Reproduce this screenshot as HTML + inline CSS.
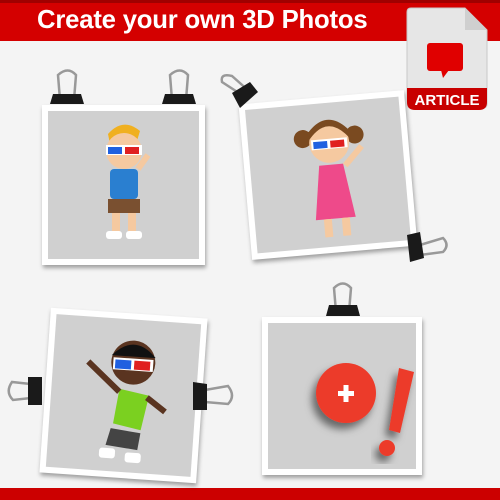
<!DOCTYPE html>
<html><head><style>
body{margin:0;width:500px;height:500px;overflow:hidden;background:#f4f4f4;position:relative;font-family:"Liberation Sans",sans-serif}
.top{position:absolute;left:0;top:0;width:500px;height:41px;background:#d40000;border-top:3px solid #a00000;box-sizing:border-box}
.top h1{margin:0;position:absolute;left:37px;top:3px;color:#fff;font-size:25.7px;font-weight:bold;letter-spacing:-0.2px}
.bot{position:absolute;left:0;top:488px;width:500px;height:12px;background:#cc0000}
.fr{position:absolute;background:#fff;box-shadow:1px 3px 4px rgba(0,0,0,.35);box-sizing:border-box;padding:6px}
.fr .in{width:100%;height:100%;background:#d0d0d0;position:relative;overflow:hidden}
.clip{position:absolute}
.art{position:absolute;left:405px;top:6px;width:84px;height:104px}
</style></head><body>
<div class="top"><h1>Create your own 3D Photos</h1></div>
<div class="bot"></div>

<!-- frame 1 -->
<div class="fr" style="left:42px;top:105px;width:163px;height:160px"><div class="in">
<svg width="151" height="148"><g transform="translate(40,8)">
<path d="M20 15 Q35 -2 52 12 L48 25 L22 25Z" fill="#f0b020"/>
<circle cx="36" cy="32" r="18" fill="#f5c9a0"/>
<rect x="18" y="26" width="36" height="10" fill="#fff"/><rect x="20" y="28" width="14" height="7" fill="#2060e0"/><rect x="37" y="28" width="14" height="7" fill="#e02020"/>
<rect x="22" y="50" width="28" height="30" rx="4" fill="#2a7fd0"/>
<rect x="20" y="80" width="32" height="14" fill="#7a5030"/>
<rect x="24" y="94" width="8" height="20" fill="#f5c9a0"/><rect x="40" y="94" width="8" height="20" fill="#f5c9a0"/>
<rect x="18" y="112" width="16" height="8" rx="3" fill="#fff"/><rect x="38" y="112" width="16" height="8" rx="3" fill="#fff"/>
<path d="M50 50 L60 36" stroke="#f5c9a0" stroke-width="6"/></g></svg>
</div></div>
<!-- frame 2 -->
<div class="fr" style="left:245px;top:97px;width:166px;height:156px;transform:rotate(-5deg)"><div class="in">
<svg width="154" height="144"><g transform="translate(45,6)">
<circle cx="10" cy="28" r="9" fill="#7a4a20"/><circle cx="62" cy="28" r="9" fill="#7a4a20"/>
<circle cx="36" cy="34" r="20" fill="#f5c9a0"/><path d="M16 30 Q36 5 56 30 L56 22 Q36 0 16 22Z" fill="#7a4a20"/>
<rect x="18" y="30" width="36" height="10" fill="#fff"/><rect x="20" y="32" width="14" height="7" fill="#2060e0"/><rect x="37" y="32" width="14" height="7" fill="#e02020"/>
<path d="M24 56 L48 56 L56 110 L16 110Z" fill="#ee4a8a"/>
<rect x="24" y="110" width="8" height="18" fill="#f5c9a0"/><rect x="42" y="110" width="8" height="18" fill="#f5c9a0"/>
<path d="M50 58 L68 40" stroke="#f5c9a0" stroke-width="6"/></g></svg>
</div></div>
<!-- frame 3 -->
<div class="fr" style="left:45px;top:313px;width:157px;height:165px;transform:rotate(4deg)"><div class="in">
<svg width="145" height="153"><g transform="translate(30,15)">
<circle cx="50" cy="28" r="22" fill="#5a3420"/><path d="M28 22 Q50 -2 72 22Z" fill="#111"/>
<rect x="30" y="24" width="40" height="12" fill="#fff"/><rect x="32" y="26" width="16" height="9" fill="#2060e0"/><rect x="51" y="26" width="16" height="9" fill="#e02020"/>
<path d="M38 55 L68 60 L62 95 L34 90Z" fill="#7bd020"/>
<path d="M32 95 L62 98 L60 115 L28 112Z" fill="#444"/>
<path d="M38 58 L5 30 M66 62 L85 75" stroke="#5a3420" stroke-width="6"/>
<rect x="22" y="115" width="16" height="10" rx="3" fill="#fff"/><rect x="48" y="118" width="16" height="10" rx="3" fill="#fff"/></g></svg>
</div></div>
<!-- frame 4 -->
<div class="fr" style="left:262px;top:317px;width:160px;height:158px"><div class="in">
<svg width="148" height="146">
<defs><filter id="s" x="-50%" y="-50%" width="200%" height="200%"><feDropShadow dx="-4" dy="6" stdDeviation="4" flood-opacity=".5"/></filter></defs>
<circle cx="78" cy="70" r="30" fill="#ec3b2c" filter="url(#s)"/>
<rect x="70" y="68" width="16" height="5" fill="#fff"/><rect x="75.5" y="62" width="5" height="17" fill="#fff"/>
<path d="M131 45 L146 49 L132 110 L121 107Z" fill="#ec3b2c" filter="url(#s)"/>
<circle cx="119" cy="125" r="8" fill="#ec3b2c" filter="url(#s)"/>
</svg>
</div></div>

<!-- clips -->
<svg class="clip" style="left:0;top:0" width="500" height="500">
<g fill="none" stroke="#999" stroke-width="2.5">
<path d="M60 100 L58 75 Q68 66 76 75 L74 100"/><path d="M172 100 L170 75 Q180 66 188 75 L186 100"/>
<path d="M336 312 L334 288 Q343 279 351 288 L349 312"/>
<path d="M242 95 L222 82 Q220 73 232 76 L250 92"/>
<path d="M420 245 L443 238 Q450 245 443 252 L420 255"/>
<path d="M40 385 L12 382 Q5 392 13 400 L40 397"/>
<path d="M205 390 L228 386 Q236 396 228 404 L205 402"/>
</g>
<g fill="#1a1a1a">
<path d="M53 94 L81 94 L84 104 L50 104Z"/><path d="M165 94 L193 94 L196 104 L162 104Z"/>
<path d="M329 305 L357 305 L360 316 L326 316Z"/>
<path d="M232 93 L250 82 L258 92 L240 108Z"/>
<path d="M407 235 L420 232 L424 258 L410 262Z"/>
<path d="M28 377 L42 377 L42 405 L28 405Z"/>
<path d="M193 382 L207 384 L207 410 L193 410Z"/>
</g></svg>

<!-- article -->
<div class="art">
<svg width="84" height="104">
<path d="M2 6 Q2 2 6 2 L60 2 L82 24 L82 98 Q82 102 78 102 L6 102 Q2 102 2 98Z" fill="#e6e6e6" stroke="#c8c8c8"/>
<path d="M60 2 L60 24 L82 24Z" fill="#cfcfcf"/>
<rect x="22" y="37" width="36" height="28" rx="3" fill="#e00000"/><path d="M36 64 L38 72 L44 64Z" fill="#e00000"/>
<path d="M2 82 L82 82 L82 96 Q82 104 74 104 L10 104 Q2 104 2 96Z" fill="#c80000"/>
<text x="42" y="99" text-anchor="middle" fill="#fff" font-family="Liberation Sans" font-weight="bold" font-size="15">ARTICLE</text>
</svg></div>
</body></html>
